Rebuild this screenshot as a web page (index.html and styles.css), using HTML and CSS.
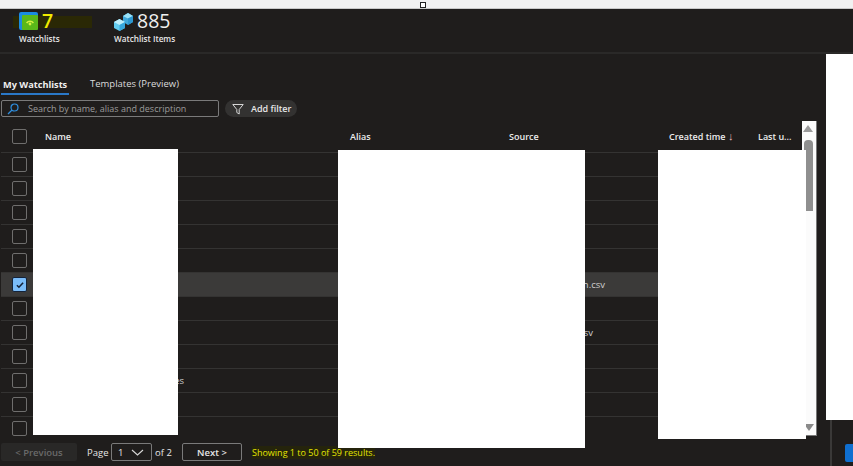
FILE: index.html
```html
<!DOCTYPE html>
<html lang="en">
<head>
<meta charset="utf-8">
<title>Watchlists</title>
<link rel="stylesheet" href="styles.css">
</head>
<body>
<div class="strip"><span class="handle"></span></div>
<header class="stats">
  <div class="stat stat-lists">
    <div class="stat-top">
      <span class="smear"></span>
      <svg class="stat-icon" width="19" height="18" viewBox="0 0 19 18">
        <path d="M2 0h15a2 2 0 0 1 2 2v3H5v13H2a2 2 0 0 1-2-2V2a2 2 0 0 1 2-2z" fill="#1a8ce0"/>
        <rect x="3" y="3" width="16" height="15" rx="1" fill="#5ab81a"/>
        <path d="M7 10.500a5 5 0 0 1 8 0l-1.200 1a3.500 3.500 0 0 0-5.600 0z" fill="#d8f040"/>
        <circle cx="11" cy="12" r="1.400" fill="#d8f040"/>
      </svg>
      <span class="stat-num stat-yellow">7</span>
    </div>
    <div class="stat-label">Watchlists</div>
  </div>
  <div class="stat stat-items">
    <div class="stat-top">
      <svg class="stat-icon" width="19" height="19" viewBox="0 0 19 19">
        <path d="M9 4l5-3 5 3v6l-5 3-5-3z" fill="#3fa9dc"/>
        <path d="M9 4l5 2.500L19 4l-5-3z" fill="#9be2f8"/>
        <path d="M14 6.500V13l5-3V4z" fill="#2c97d0"/>
        <path d="M0 10l5.500-3L11 10v6l-5.500 3L0 16z" fill="#62cdf1"/>
        <path d="M0 10l5.500 3L11 10 5.500 7z" fill="#bdeffc"/>
        <path d="M5.500 13v6l5.500-3v-6z" fill="#36a8de"/>
      </svg>
      <span class="stat-num">885</span>
    </div>
    <div class="stat-label">Watchlist Items</div>
  </div>
</header>
<div class="below">
  <main class="main">
    <nav class="tabs">
      <span class="tab tab-active">My Watchlists</span>
      <span class="tab tab-plain">Templates (Preview)</span>
    </nav>
    <div class="tools">
      <div class="search">
        <svg width="12" height="12" viewBox="0 0 12 12" fill="none" stroke="#2f8fe0" stroke-width="1.200">
          <circle cx="7.500" cy="4.500" r="3.500"/><path d="M5 7l-4 4"/>
        </svg>
        <span>Search by name, alias and description</span>
      </div>
      <div class="filter">
        <svg width="12" height="12" viewBox="0 0 12 12" fill="none" stroke="#d6d6d6" stroke-width="1">
          <path d="M.8 1.500h10.400L7.200 6.500v4.500l-2.400-1.500v-3z"/>
        </svg>
        <span>Add filter</span>
      </div>
    </div>
    <div class="table">
      <div class="row row-head">
        <span class="check-cell"><span class="check"></span></span>
        <span>Name</span><span>Alias</span><span>Source</span>
        <span>Created time <span class="sort">↓</span></span><span>Last u...</span>
      </div>
      <div class="row"><span class="check-cell"><span class="check"></span></span></div>
      <div class="row"><span class="check-cell"><span class="check"></span></span></div>
      <div class="row"><span class="check-cell"><span class="check"></span></span></div>
      <div class="row"><span class="check-cell"><span class="check"></span></span></div>
      <div class="row"><span class="check-cell"><span class="check"></span></span></div>
      <div class="row row-selected">
        <span class="check-cell"><span class="check check-on">
          <svg width="8" height="8" viewBox="0 0 9 9" fill="none" stroke="#14233a" stroke-width="1.800"><path d="M1 4.800l2.300 2.200L8 2"/></svg>
        </span></span>
        <span></span><span></span><span class="frag frag-source">n.csv</span>
      </div>
      <div class="row"><span class="check-cell"><span class="check"></span></span></div>
      <div class="row">
        <span class="check-cell"><span class="check"></span></span>
        <span></span><span></span><span class="frag frag-short">sv</span>
      </div>
      <div class="row"><span class="check-cell"><span class="check"></span></span></div>
      <div class="row">
        <span class="check-cell"><span class="check"></span></span>
        <span class="frag frag-name">es</span>
      </div>
      <div class="row"><span class="check-cell"><span class="check"></span></span></div>
      <div class="row"><span class="check-cell"><span class="check"></span></span></div>
    </div>
    <footer class="pager">
      <span class="btn btn-off">&lt; Previous</span>
      <span class="page-word">Page</span>
      <span class="select">1
        <svg width="13" height="7" viewBox="0 0 13 7" fill="none" stroke="#d8d8d8" stroke-width="1.100"><path d="M1 1l5.500 5L12 1"/></svg>
      </span>
      <span class="page-of">of 2</span>
      <span class="btn btn-next">Next &gt;</span>
      <span class="results">Showing 1 to 50 of 59 results.</span>
    </footer>
  </main>
  <aside class="side">
    <div class="side-white"></div>
    <div class="side-low">
      <span class="side-blue"></span>
    </div>
  </aside>
</div>
<div class="scroll">
  <span class="arrow-up"></span>
  <span class="thumb"></span>
  <span class="arrow-down"></span>
</div>
<div class="mask mask-a"></div>
<div class="mask mask-b"></div>
<div class="mask mask-c"></div>
</body>
</html>
```
FILE: styles.css
```css
* { box-sizing: border-box; }
html, body { margin: 0; height: 466px; overflow: hidden; }
body {
  position: relative;
  width: 853px;
  background: #1f1d1c;
  color: #e6e6e6;
  font-family: "Open Sans", "Noto Sans", "Liberation Sans", sans-serif;
  font-size: 9.5px;
  display: flex;
  flex-direction: column;
}
.strip {
  height: 9px;
  background: #f1f1f1;
  border-bottom: 1px solid #c8c8c8;
  flex: none;
  position: relative;
}
.handle {
  position: absolute;
  left: 420px;
  top: 2px;
  width: 6px;
  height: 6px;
  background: #fff;
  border: 1px solid #222;
}
.stats {
  height: 45px;
  flex: none;
  display: flex;
  padding: 2px 0 0 19px;
  border-bottom: 2px solid #2a2928;
}
.stat-lists { width: 95px; }
.stat-top { display: flex; align-items: center; height: 20px; position: relative; }
.stat-icon { flex: none; position: relative; }
.stat-num { font-size: 19.5px; line-height: 20px; margin-left: 4px; color: #f0f0f0; position: relative; font-weight: 500; }
.stat-yellow { color: #f0ea00; font-weight: 600; }
.smear {
  position: absolute;
  left: -6px;
  top: 5px;
  width: 79px;
  height: 12px;
  background: #2a2805;
}
.stat-label { font-size: 8.2px; font-weight: 600; margin-top: 2px; color: #e8e8e8; }
.below { flex: 1; display: flex; min-height: 0; }
.main { width: 826px; flex: none; display: flex; flex-direction: column; padding-left: 1px; }
.tabs { display: flex; height: 41px; align-items: flex-end; padding-top: 17px; }
.tab { font-size: 9.5px; color: #dcdcdc; }
.tab-active {
  font-weight: 700;
  color: #efefef;
  width: 68px;
  padding: 0 0 2px 2px;
  border-bottom: 2px solid #2a78c8;
  white-space: nowrap;
  font-size: 9.2px;
}
.tab-plain { margin-left: 21px; padding-bottom: 5px; }
.tools { display: flex; height: 17px; margin-top: 5px; gap: 6px; }
.search {
  width: 218px;
  border: 1px solid #7a7a7a;
  border-radius: 2px;
  display: flex;
  align-items: center;
  gap: 9px;
  padding-left: 5px;
  color: #9b9b9b;
  font-size: 9px;
}
.filter {
  width: 72px;
  border-radius: 9px;
  background: #333231;
  display: flex;
  align-items: center;
  gap: 7px;
  padding-left: 7px;
  font-size: 9px;
  font-weight: 600;
}
.table { height: 314px; overflow: hidden; margin-top: 6px; }
.row {
  display: grid;
  grid-template-columns: 44px 305px 159px 160px 89px 1fr;
  align-items: center;
  height: 24px;
  width: 801px;
  border-bottom: 1px solid #343332;
  color: #cfcfcf;
}
.row-head { height: 30px; padding-bottom: 3px; font-weight: 600; font-size: 9px; color: #ececec; }
.row-selected { background: #3b3a39; }
.check-cell { display: flex; padding-left: 11px; }
.check {
  width: 15px;
  height: 15px;
  border: 1.5px solid #6f6e6d;
  border-radius: 2px;
  display: flex;
  align-items: center;
  justify-content: center;
}
.check-on { background: #7abcf9; border-color: #14233a; }
.sort { color: #e8b8b8; font-size: 11px; line-height: 9px; }
.frag { text-align: right; font-size: 9.5px; white-space: nowrap; }
.frag-name { width: 139px; }
.frag-source { width: 96px; }
.frag-short { width: 84px; }
.pager { display: flex; align-items: center; height: 18px; margin-top: 6px; font-size: 9.5px; }
.btn { height: 18px; display: flex; align-items: center; justify-content: center; font-weight: 600; }
.btn-off { width: 76px; background: #292827; color: #6a6a6a; border-radius: 2px; }
.page-word { margin-left: 10px; width: 24px; }
.select {
  width: 41px;
  height: 18px;
  border: 1px solid #7a7a7a;
  border-radius: 2px;
  display: flex;
  align-items: center;
  justify-content: space-between;
  padding: 0 7px 0 6px;
}
.page-of { margin-left: 3px; width: 27px; }
.btn-next { width: 60px; border: 1px solid #7a7a7a; border-radius: 2px; }
.results { margin-left: 10px; color: #e4e400; background: #25240c; font-size: 9px; white-space: nowrap; }
.side { flex: 1; display: flex; flex-direction: column; }
.side-white { height: 366px; background: #fff; }
.side-low {
  flex: 1;
  margin-left: 4px;
  border-left: 2px solid #3a3938;
  padding-top: 12px;
}
.side-blue {
  display: block;
  margin: 12px 0 0 13px;
  height: 18px;
  background: #0f6fd0;
  border-radius: 2px 0 0 2px;
}
.scroll {
  position: absolute;
  left: 802px;
  top: 121px;
  width: 15px;
  height: 315px;
  background: #fbfbfb;
  border-right: 1px solid #777;
  border-bottom: 1px solid #777;
}
.arrow-up {
  position: absolute;
  left: 1px;
  top: 4px;
  border: 5px solid transparent;
  border-top: 0;
  border-bottom: 7px solid #9a9a9a;
}
.arrow-down {
  position: absolute;
  left: 2px;
  bottom: 4px;
  border: 5px solid transparent;
  border-bottom: 0;
  border-top: 7px solid #8a8a8a;
}
.thumb {
  position: absolute;
  left: 2px;
  top: 19px;
  width: 9px;
  height: 71px;
  background: #8f8f8f;
  border-radius: 4px 4px 0 0;
}
.mask { position: absolute; background: #fff; }
.mask-a { left: 33px; top: 149px; width: 145px; height: 286px; }
.mask-b { left: 338px; top: 150px; width: 247px; height: 298px; }
.mask-c { left: 658px; top: 150px; width: 148px; height: 289px; }
```
